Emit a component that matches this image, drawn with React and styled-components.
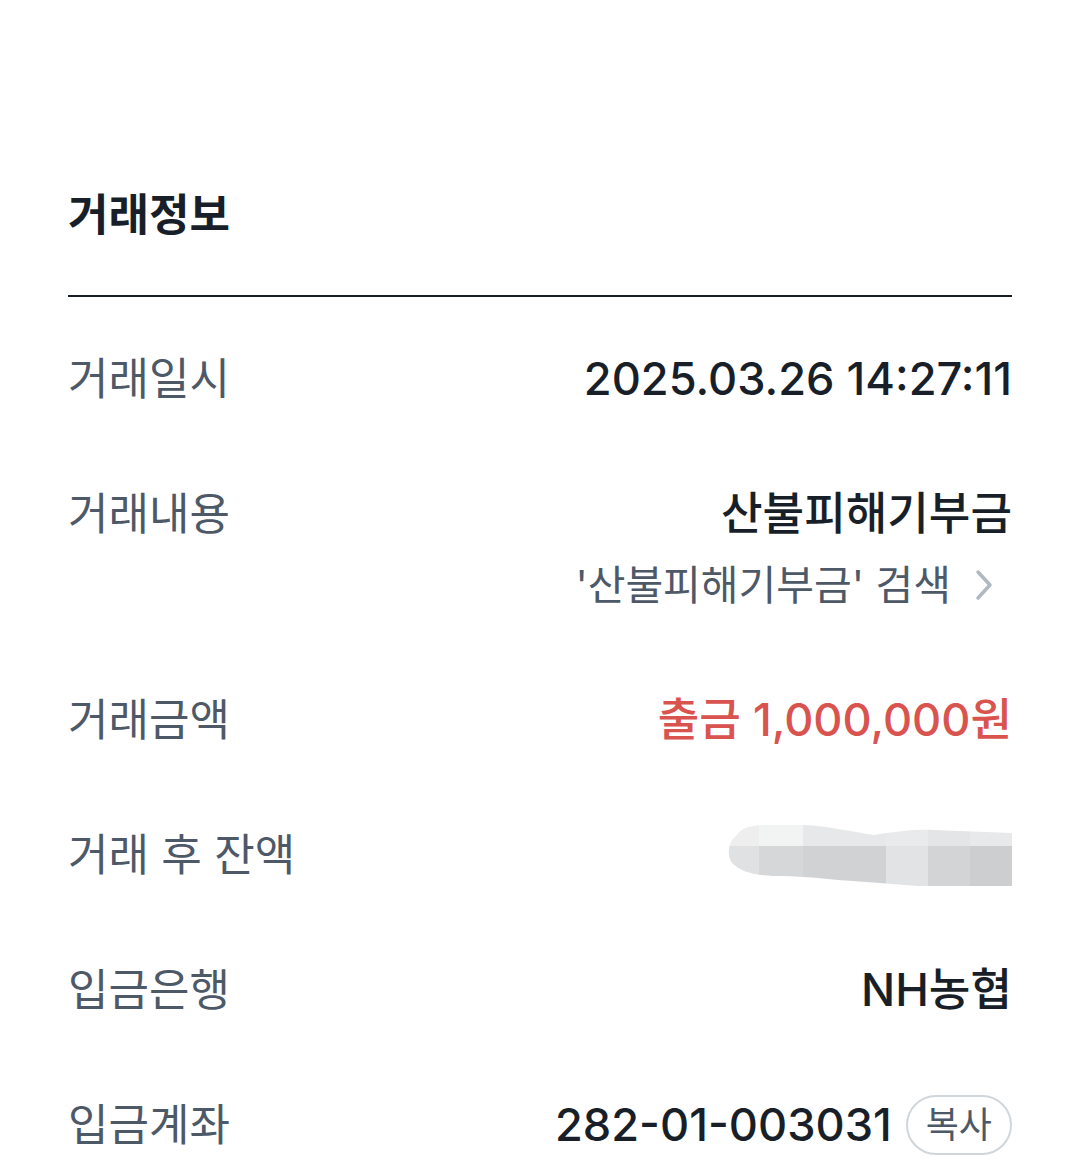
import React from 'react';
import styled, { createGlobalStyle } from 'styled-components';

const GlobalStyle = createGlobalStyle`
  html, body {
    margin: 0;
    padding: 0;
    background: #ffffff;
  }
  body {
    font-family: 'Inter', 'Noto Sans CJK KR', sans-serif;
    -webkit-font-smoothing: antialiased;
  }
`;

const Page = styled.div`
  width: 1080px;
  height: 1166px;
  overflow: hidden;
  padding: 184px 68px 0;
  box-sizing: border-box;
`;

const Title = styled.h2`
  margin: 0;
  font-size: 44px;
  line-height: 62px;
  font-weight: 700;
  color: #191f28;
`;

const Divider = styled.hr`
  margin: 49px 0 0;
  border: 0;
  height: 2px;
  background: #191f28;
`;

const List = styled.div`
  display: flex;
  flex-direction: column;
  padding-top: 15px;
`;

const Row = styled.div`
  display: flex;
  justify-content: space-between;
  align-items: flex-start;
  padding: 36px 0 37px;
`;

const Label = styled.div`
  font-size: 44px;
  line-height: 62px;
  color: #4e5968;
  white-space: nowrap;
`;

const ValueCol = styled.div`
  display: flex;
  flex-direction: column;
  align-items: flex-end;
`;

const Value = styled.div`
  display: flex;
  align-items: center;
  gap: 14px;
  font-size: 45.2px;
  line-height: 62px;
  font-weight: 500;
  color: ${(p) => p.$color || '#191f28'};
  white-space: nowrap;
`;

const SearchLink = styled.a`
  display: flex;
  align-items: center;
  gap: 24px;
  margin-top: 9px;
  font-size: 41px;
  line-height: 62px;
  color: #4e5968;
  text-decoration: none;
  padding-right: 19px;
`;

const CopyButton = styled.button`
  height: 60px;
  padding: 0 18px;
  border: 2px solid #d1d6db;
  border-radius: 30px;
  background: #ffffff;
  font-family: inherit;
  font-size: 36px;
  color: #4e5968;
  line-height: 1;
`;

const Chevron = () => (
  <svg width="18" height="32" viewBox="0 0 18 32" fill="none">
    <path d="M3 3l12 13L3 29" stroke="#b0b8c1" strokeWidth="3.5" strokeLinecap="round" strokeLinejoin="round" />
  </svg>
);

const Redacted = () => (
  <svg width="284" height="62" viewBox="0 0 284 62">
    <defs>
      <clipPath id="smudge">
        <path d="M8 12 C14 3 24 1 40 1 L75 1 C100 2 125 8 146 11 C170 7 190 5 205 6 L284 9 L284 62 L190 62 C165 60 140 58 110 56 C90 54 70 52 45 52 C20 51 2 44 1 31 C0 22 3 16 8 12 Z" />
      </clipPath>
    </defs>
    <g clipPath="url(#smudge)">
      <rect x="0" y="0" width="31" height="22" fill="#eeeeef" />
      <rect x="31" y="0" width="44" height="22" fill="#f2f3f3" />
      <rect x="75" y="0" width="83" height="22" fill="#e7e8e9" />
      <rect x="158" y="0" width="42" height="22" fill="#e9eaeb" />
      <rect x="200" y="0" width="42" height="22" fill="#e4e5e6" />
      <rect x="242" y="0" width="42" height="22" fill="#e8e9ea" />
      <rect x="0" y="22" width="31" height="40" fill="#e0e1e3" />
      <rect x="31" y="22" width="44" height="40" fill="#d6d7d9" />
      <rect x="75" y="22" width="83" height="40" fill="#d1d2d4" />
      <rect x="158" y="22" width="42" height="40" fill="#e2e3e4" />
      <rect x="200" y="22" width="42" height="40" fill="#d3d4d6" />
      <rect x="242" y="22" width="42" height="40" fill="#cdced0" />
    </g>
  </svg>
);

const RedactedWrap = styled.div`
  display: flex;
  align-items: center;
  height: 62px;
`;

export default function App() {
  return (
    <>
      <GlobalStyle />
      <Page>
        <Title>거래정보</Title>
        <Divider />
        <List>
          <Row>
            <Label>거래일시</Label>
            <Value>2025.03.26 14:27:11</Value>
          </Row>
          <Row>
            <Label>거래내용</Label>
            <ValueCol>
              <Value>산불피해기부금</Value>
              <SearchLink href="#">
                <span>'산불피해기부금' 검색</span>
                <Chevron />
              </SearchLink>
            </ValueCol>
          </Row>
          <Row>
            <Label>거래금액</Label>
            <Value $color="#d9534f">출금 1,000,000원</Value>
          </Row>
          <Row>
            <Label>거래 후 잔액</Label>
            <RedactedWrap>
              <Redacted />
            </RedactedWrap>
          </Row>
          <Row>
            <Label>입금은행</Label>
            <Value>NH농협</Value>
          </Row>
          <Row>
            <Label>입금계좌</Label>
            <Value>
              282-01-003031
              <CopyButton>복사</CopyButton>
            </Value>
          </Row>
        </List>
      </Page>
    </>
  );
}
